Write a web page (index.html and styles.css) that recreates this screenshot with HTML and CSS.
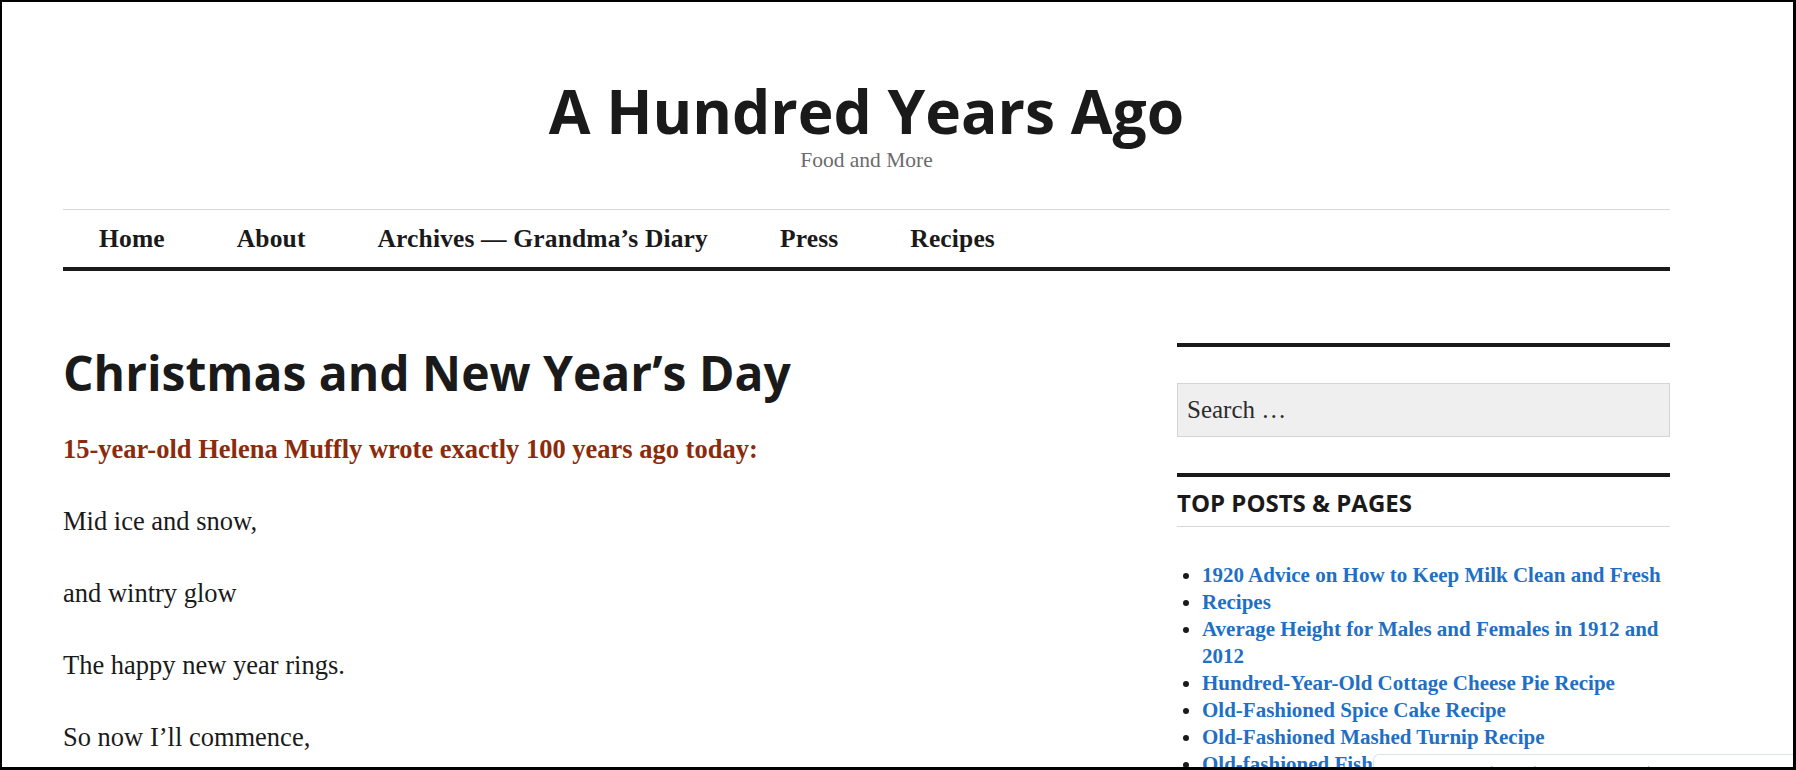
FILE: index.html
```html
<!DOCTYPE html>
<html lang="en">
<head>
<meta charset="utf-8">
<title>A Hundred Years Ago</title>
<link rel="stylesheet" href="styles.css">
</head>
<body>
<div class="frame">
  <div class="site">
    <header class="site-header">
      <h1 class="site-title">A Hundred Years Ago</h1>
      <p class="site-description">Food and More</p>
    </header>
    <nav class="main-nav">
      <ul class="menu">
        <li><a href="#">Home</a></li>
        <li><a href="#">About</a></li>
        <li><a href="#">Archives — Grandma’s Diary</a></li>
        <li><a href="#">Press</a></li>
        <li><a href="#">Recipes</a></li>
      </ul>
    </nav>
    <div class="content">
      <main class="entry">
        <h2 class="entry-title">Christmas and New Year’s Day</h2>
        <p><strong class="lead">15-year-old Helena Muffly wrote exactly 100 years ago today:</strong></p>
        <p>Mid ice and snow,</p>
        <p>and wintry glow</p>
        <p>The happy new year rings.</p>
        <p>So now I’ll commence,</p>
      </main>
      <aside class="sidebar">
        <section class="widget widget-search">
          <input class="search-field" type="search" placeholder="Search …">
        </section>
        <section class="widget widget-top">
          <h2 class="widget-title">Top Posts &amp; Pages</h2>
          <ul class="top-list">
            <li><a href="#">1920 Advice on How to Keep Milk Clean and Fresh</a></li>
            <li><a href="#">Recipes</a></li>
            <li><a href="#">Average Height for Males and Females in 1912 and 2012</a></li>
            <li><a href="#">Hundred-Year-Old Cottage Cheese Pie Recipe</a></li>
            <li><a href="#">Old-Fashioned Spice Cake Recipe</a></li>
            <li><a href="#">Old-Fashioned Mashed Turnip Recipe</a></li>
            <li><a href="#">Old-fashioned Fish Chowder Recipe</a></li>
          </ul>
        </section>
      </aside>
    </div>
  </div>
  <div class="cookie-bar">
    <p class="cookie-text">Privacy &amp; Cookies: This site uses cookies. By continuing to use this website, you agree to their use.</p>
  </div>
</div>
</body>
</html>
```
FILE: styles.css
```css
html, body {
  margin: 0;
  padding: 0;
  background: #fff;
}

.frame {
  position: relative;
  width: 1796px;
  height: 770px;
  box-sizing: border-box;
  border: 2px solid #000;
  border-right-width: 3px;
  border-bottom-width: 3px;
  overflow: hidden;
  background: #fff;
  color: #1a1a1a;
  font-family: "Liberation Serif", "Times New Roman", serif;
}

.site {
  margin-left: 61px;
  width: 1607px;
}

/* Header */
.site-header {
  text-align: center;
}

.site-title {
  margin: 74px 0 0;
  font-family: "Open Sans", "Liberation Sans", sans-serif;
  font-weight: 700;
  font-size: 60.5px;
  line-height: 69px;
  color: #1a1a1a;
}

.site-description {
  margin: 0;
  font-size: 21.5px;
  line-height: 30px;
  color: #6b6b6b;
}

/* Navigation */
.main-nav {
  margin-top: 34px;
  border-top: 1px solid #d8d8d8;
  border-bottom: 4px solid #1a1a1a;
}

.menu {
  display: flex;
  list-style: none;
  margin: 0;
  padding: 0;
}

.menu a {
  display: block;
  padding: 0 36px;
  font-weight: 700;
  font-size: 25.5px;
  line-height: 57px;
  letter-spacing: 0.15px;
  color: #1a1a1a;
  text-decoration: none;
}

/* Content */
.content {
  display: grid;
  grid-template-columns: 1fr 493px;
  column-gap: 114px;
  padding-top: 72px;
}

.entry-title {
  margin: 0 0 26px;
  font-family: "Open Sans", "Liberation Sans", sans-serif;
  font-weight: 700;
  font-size: 48px;
  line-height: 60px;
  color: #1a1a1a;
}

.entry p {
  margin: 0 0 32px;
  font-size: 26.5px;
  line-height: 40px;
  color: #1a1a1a;
}

.lead {
  color: #8c2b0c;
  font-weight: 700;
}

/* Sidebar */
.widget {
  border-top: 4px solid #1a1a1a;
}

.widget-search {
  padding-top: 36px;
}

.search-field {
  display: block;
  width: 100%;
  height: 54px;
  box-sizing: border-box;
  margin: 0;
  padding: 0 9px;
  border: 1px solid #d4d4d4;
  border-radius: 0;
  background: #efefef;
  font-family: "Liberation Serif", "Times New Roman", serif;
  font-size: 25px;
  color: #1a1a1a;
  outline: none;
  -webkit-appearance: none;
  appearance: none;
}

.search-field::placeholder {
  color: #2b2b2b;
  opacity: 1;
}

.widget-top {
  margin-top: 36px;
}

.widget-title {
  margin: 0;
  padding: 11px 0 8px;
  border-bottom: 1px solid #d8d8d8;
  font-family: "Open Sans", "Liberation Sans", sans-serif;
  font-weight: 700;
  font-size: 24px;
  line-height: 30px;
  text-transform: uppercase;
  color: #1a1a1a;
}

.top-list {
  margin: 35px 0 0;
  padding-left: 25px;
  font-weight: 700;
  font-size: 21px;
  line-height: 27px;
  color: #1a1a1a;
}

.top-list a {
  color: #1f6fc5;
  text-decoration: none;
}

/* Cookie notice overlay */
.cookie-bar {
  position: absolute;
  left: 1371px;
  top: 752px;
  right: 0;
  height: 60px;
  box-sizing: border-box;
  background: #fff;
  border: 1px solid #dde2e8;
  border-right: none;
  border-radius: 6px 0 0 0;
  padding: 6px 20px 0;
}

.cookie-text {
  margin: 0;
  font-family: "Open Sans", "Liberation Sans", sans-serif;
  font-size: 15px;
  line-height: 20px;
  color: #b0b0b0;
  white-space: nowrap;
}
```
